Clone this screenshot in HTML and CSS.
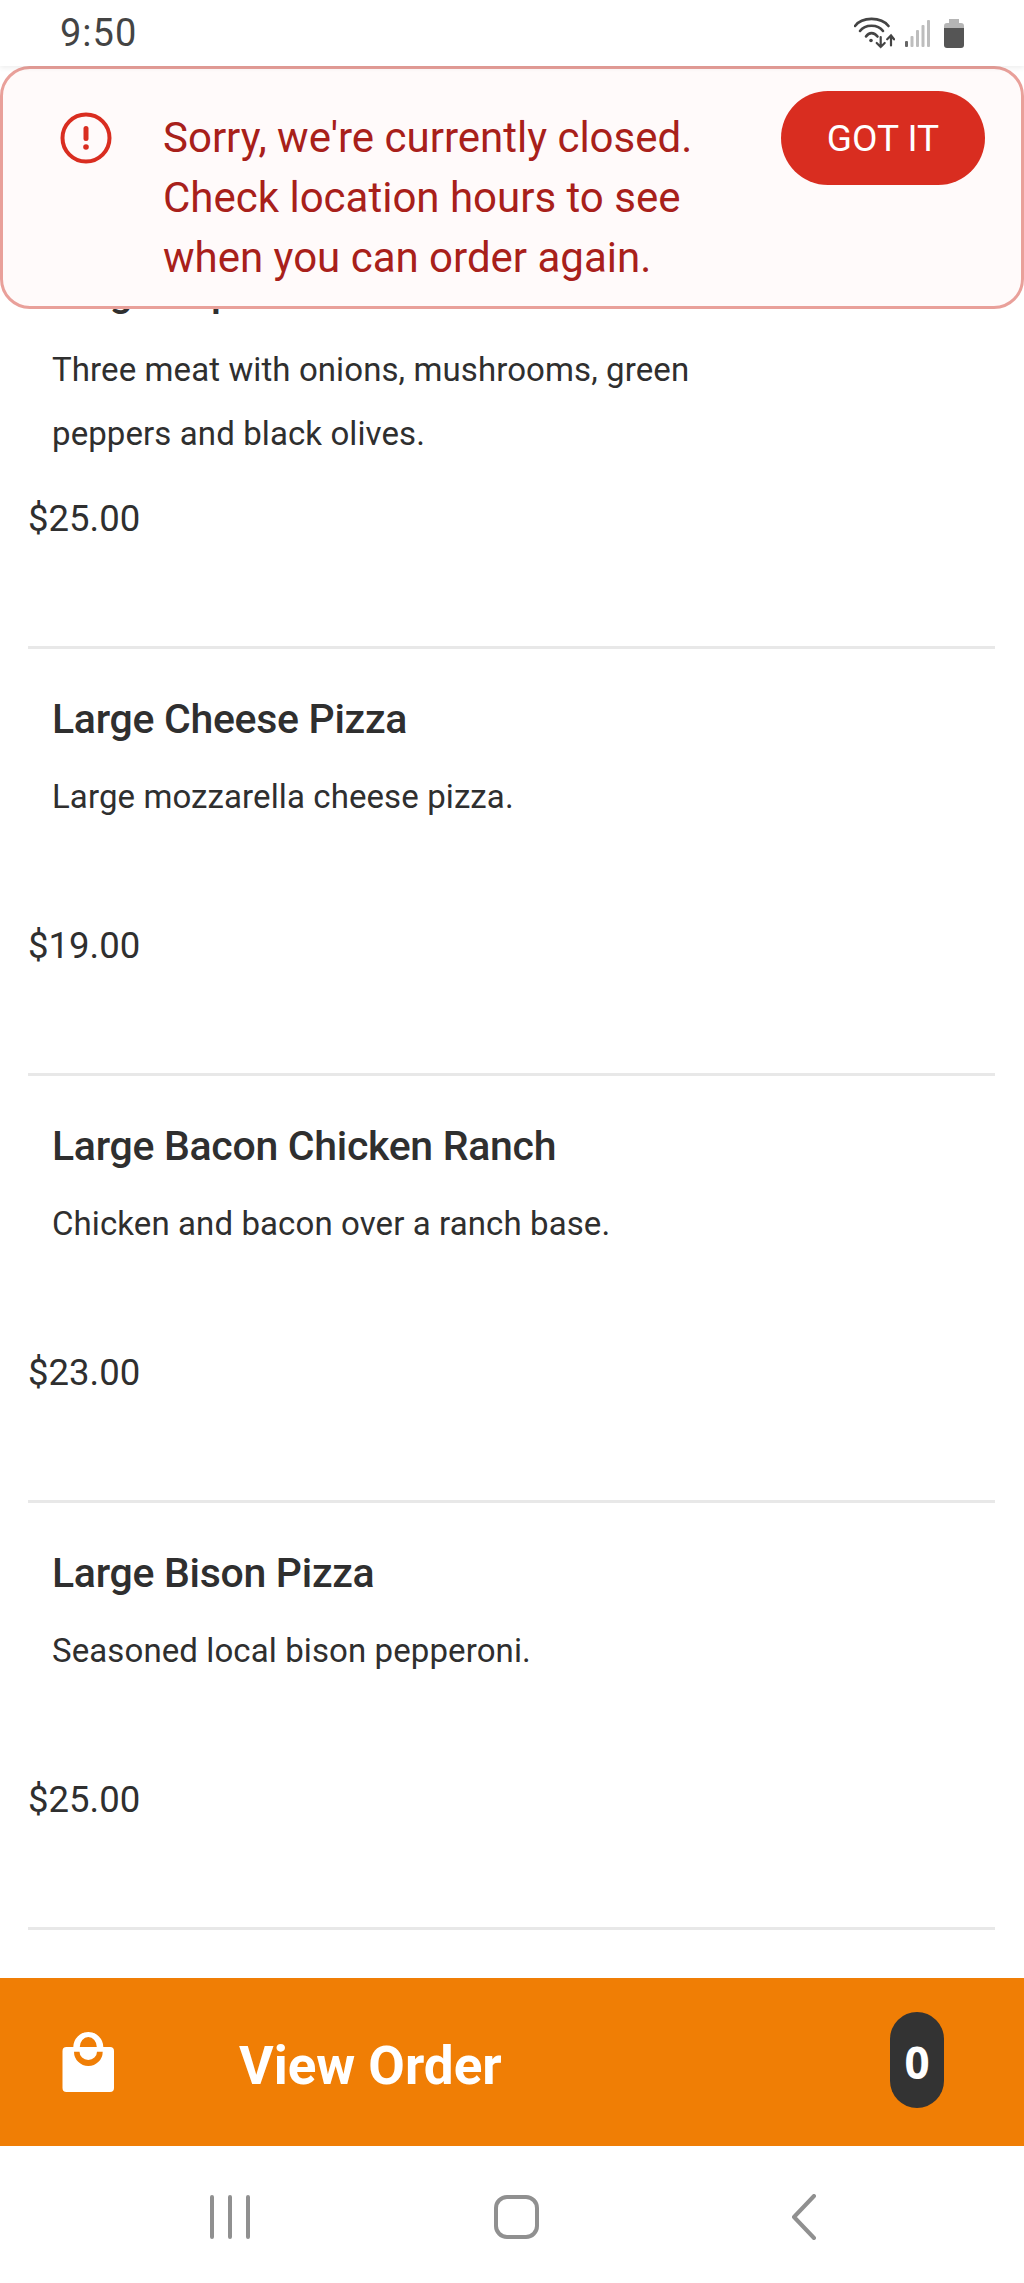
FILE: index.html
```html
<!DOCTYPE html>
<html lang="en">
<head>
  <meta charset="UTF-8">
  <meta name="viewport" content="width=device-width, initial-scale=1.0">
  <title>Menu</title>
  <link rel="stylesheet" href="styles.css">
</head>
<body>
  <div class="phone">
    <div class="status-bar">
      <span class="clock">9:50</span>
      <div class="status-icons">
        <svg class="wifi" width="41" height="32" viewBox="0 0 41 32" fill="none" stroke="#444" stroke-linecap="round">
          <path d="M1 9C8 -0.500 27 -0.500 34.500 9" stroke-width="2.600"/>
          <path d="M6 14C11 7 24 7 29 14" stroke-width="2.600"/>
          <path d="M12 19.500C15 15 20 15 23.500 19.500" stroke-width="2.600"/>
          <circle cx="17" cy="23.500" r="1.800" fill="#444" stroke="none"/>
          <path d="M26.700 20V30M22.700 26L26.700 30L30.700 26" stroke-width="2.200"/>
          <path d="M37 28.500V18.500M33.200 22.300L37 18.500L40 22.300" stroke-width="2.200"/>
        </svg>
        <svg class="signal" width="25" height="28" viewBox="0 0 25 28" fill="#bdbdbd">
          <rect x="0" y="22" width="3" height="6" rx="1" fill="#666"/>
          <rect x="5.500" y="17" width="3" height="11" rx="1"/>
          <rect x="11" y="11" width="3" height="17" rx="1"/>
          <rect x="16.500" y="6" width="3" height="22" rx="1"/>
          <rect x="22" y="1" width="3" height="27" rx="1"/>
        </svg>
        <svg class="battery" width="20" height="29" viewBox="0 0 20 29">
          <path d="M5 0H15V4H17A3 3 0 0 1 20 7V9H0V7A3 3 0 0 1 3 4H5Z" fill="#b5b5b5"/>
          <path d="M0 9H20V26A3 3 0 0 1 17 29H3A3 3 0 0 1 0 26Z" fill="#555"/>
        </svg>
      </div>
    </div>

    <main class="menu">
      <div class="closed-banner">
        <svg class="alert-icon" width="52" height="52" viewBox="0 0 52 52">
          <circle cx="26" cy="26" r="23.500" fill="none" stroke="#d92d20" stroke-width="4"/>
          <rect x="23.500" y="14" width="5" height="15" rx="2.500" fill="#d92d20"/>
          <circle cx="26" cy="35" r="2.800" fill="#d92d20"/>
        </svg>
        <p class="closed-text">Sorry, we're currently closed.<br>Check location hours to see<br>when you can order again.</p>
        <button class="got-it">GOT IT</button>
      </div>

      <ul class="items">
        <li class="item">
          <h3 class="item-name">Large Supreme</h3>
          <p class="item-desc">Three meat with onions, mushrooms, green peppers and black olives.</p>
          <p class="item-price">$25.00</p>
        </li>
        <li class="item">
          <h3 class="item-name">Large Cheese Pizza</h3>
          <p class="item-desc">Large mozzarella cheese pizza.</p>
          <p class="item-price">$19.00</p>
        </li>
        <li class="item">
          <h3 class="item-name">Large Bacon Chicken Ranch</h3>
          <p class="item-desc">Chicken and bacon over a ranch base.</p>
          <p class="item-price">$23.00</p>
        </li>
        <li class="item">
          <h3 class="item-name">Large Bison Pizza</h3>
          <p class="item-desc">Seasoned local bison pepperoni.</p>
          <p class="item-price">$25.00</p>
        </li>
      </ul>
    </main>

    <div class="order-bar">
      <svg class="bag-icon" width="52" height="60" viewBox="0 0 52 60">
        <path fill="#fff" fill-rule="evenodd" d="M26.300 0A15 15 0 0 1 41.300 15H48A4 4 0 0 1 52 19V56A4 4 0 0 1 48 60H4.500A4 4 0 0 1 0.500 56V19A4 4 0 0 1 4.500 15H11.300A15 15 0 0 1 26.300 0ZM26.300 5A8.500 10 0 0 0 17.800 15H34.800A8.500 10 0 0 0 26.300 5Z"/>
        <path fill="#f07e05" d="M12 19.700A14.350 14.300 0 0 0 40.700 19.700H35A8.750 8.300 0 0 1 17.500 19.700Z"/>
      </svg>
      <span class="order-label">View Order</span>
      <span class="order-count">0</span>
    </div>

    <nav class="nav-bar">
      <svg width="42" height="44" viewBox="0 0 42 44" fill="none" stroke="#909090" stroke-width="4" stroke-linecap="round">
        <path d="M3 2V42M21 2V42M39 2V42"/>
      </svg>
      <svg class="nav-home" width="45" height="44" viewBox="0 0 45 44" fill="none" stroke="#909090" stroke-width="4">
        <rect x="2" y="2" width="41" height="40" rx="11"/>
      </svg>
      <svg class="nav-back" width="28" height="46" viewBox="0 0 28 46" fill="none" stroke="#909090" stroke-width="4" stroke-linecap="round" stroke-linejoin="round">
        <path d="M24 2L4 23L24 44"/>
      </svg>
    </nav>
  </div>
</body>
</html>
```

FILE: styles.css
```css
* {
  box-sizing: border-box;
}
html, body {
  margin: 0;
  padding: 0;
}
body {
  background-color: #fff;
  color: #2f2f2f;
  font-family: Roboto, "Noto Sans", sans-serif;
}
.phone {
  width: 1024px;
  height: 2283px;
  display: flex;
  flex-direction: column;
  overflow: hidden;
}

.status-bar {
  position: relative;
  z-index: 3;
  height: 66px;
  flex: none;
  display: flex;
  align-items: center;
  justify-content: space-between;
  padding: 0 60px 0 60px;
  background-color: #fff;
  box-shadow: 0 2px 5px rgba(0,0,0,0.07);
}
.clock {
  font-size: 38px;
  letter-spacing: 1px;
  color: #444;
}
.status-icons {
  display: flex;
  align-items: center;
}
.wifi {
  margin-right: 10px;
}
.signal {
  margin-right: 14px;
}

.menu {
  position: relative;
  flex: 1;
  min-height: 0;
  overflow: hidden;
  background-color: #fff;
}
.closed-banner {
  position: absolute;
  top: 0;
  left: 0;
  right: 0;
  height: 243px;
  display: flex;
  align-items: flex-start;
  padding: 22px 36px 0 57px;
  background-color: #fffafa;
  border: 3px solid #e9a09a;
  border-radius: 30px;
  z-index: 2;
}
.alert-icon {
  flex: none;
  margin-top: 21px;
}
.closed-text {
  flex: 1;
  margin: 17px 0 0 51px;
  font-size: 42px;
  line-height: 60px;
  color: #a8201a;
}
.got-it {
  flex: none;
  width: 204px;
  height: 94px;
  border: none;
  border-radius: 47px;
  background-color: #d92d20;
  color: #fff;
  font-family: inherit;
  font-size: 37px;
  cursor: pointer;
}

.items {
  list-style: none;
  margin: 0;
  padding: 156px 29px 0 28px;
}
.item {
  height: 427px;
  border-bottom: 3px solid #e8e8e8;
}
.item-name {
  margin: 0 0 0 24px;
  padding-top: 44px;
  font-size: 41px;
  letter-spacing: -0.3px;
  line-height: 52px;
  font-weight: 500;
}
.item-desc {
  margin: 20px 0 0 24px;
  width: 680px;
  min-height: 128px;
  font-size: 33px;
  letter-spacing: 0.1px;
  line-height: 64px;
}
.item-price {
  margin: 21px 0 0;
  font-size: 36.500px;
  line-height: 64px;
}

.order-bar {
  flex: none;
  height: 168px;
  display: flex;
  align-items: center;
  padding: 0 80px 0 62px;
  background-color: #f07e05;
  color: #fff;
}
.bag-icon {
  flex: none;
}
.order-label {
  flex: 1;
  margin: 8px 0 0 125px;
  font-size: 53px;
  font-weight: 700;
}
.order-count {
  width: 54px;
  height: 96px;
  display: flex;
  align-items: center;
  justify-content: center;
  margin-bottom: 4px;
  padding-top: 4px;
  border-radius: 27px;
  background-color: #333;
  font-family: "Open Sans", sans-serif;
  font-size: 44px;
  font-weight: 700;
}

.nav-bar {
  height: 137px;
  flex: none;
  display: flex;
  align-items: center;
  padding: 4px 0 0 209px;
  background-color: #fff;
}
.nav-home {
  margin-left: 243px;
}
.nav-back {
  margin-left: 251px;
}
```
